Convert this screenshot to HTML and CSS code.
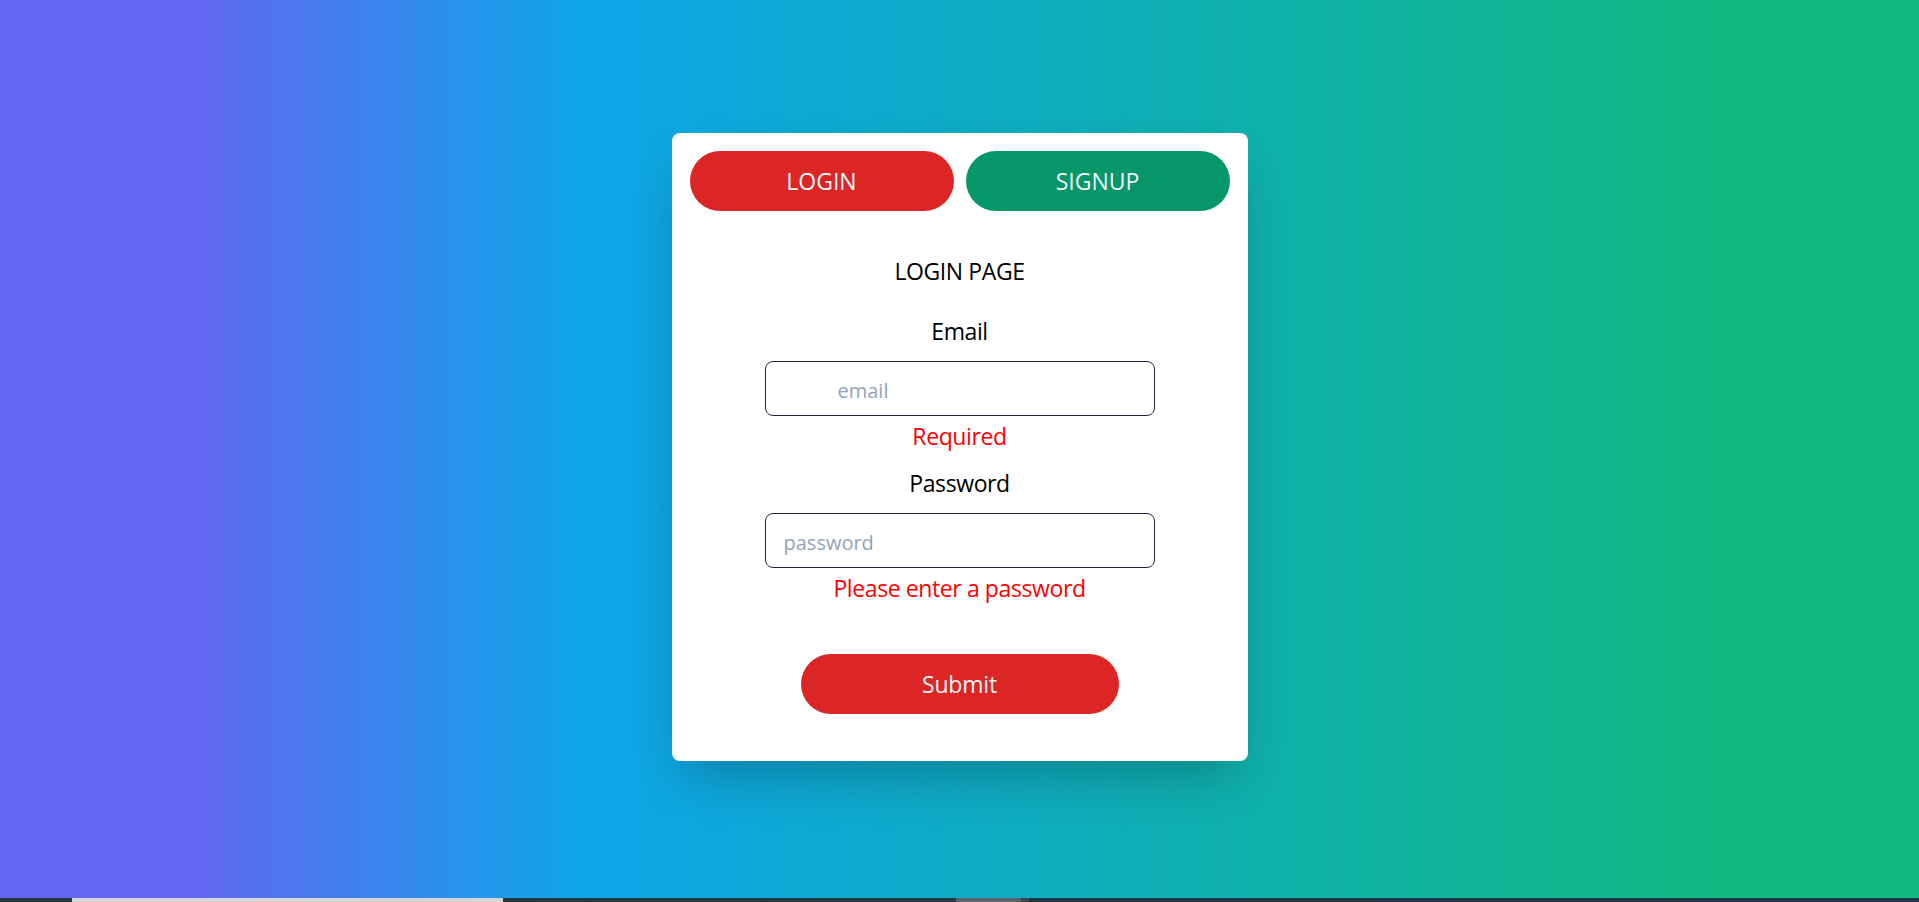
FILE: index.html
```html
<!DOCTYPE html>
<html lang="en">
<head>
<meta charset="utf-8">
<title>Login</title>
<link rel="stylesheet" href="styles.css">
</head>
<body>
<main class="page">
  <div class="card">
    <div class="tabs">
      <button class="tab tab-login" type="button">LOGIN</button>
      <button class="tab tab-signup" type="button">SIGNUP</button>
    </div>
    <form class="form">
      <h1 class="title">LOGIN PAGE</h1>
      <label class="label label-email" for="email">Email</label>
      <input id="email" class="input input-email" type="text" placeholder="email">
      <p class="error">Required</p>
      <label class="label label-password" for="password">Password</label>
      <input id="password" class="input input-password" type="password" placeholder="password">
      <p class="error">Please enter a password</p>
      <button class="submit" type="button">Submit</button>
    </form>
  </div>
</main>
<div class="taskbar">
  <span class="tb-seg tb-dark1"></span>
  <span class="tb-seg tb-light"></span>
  <span class="tb-seg tb-dark2"></span>
  <span class="tb-seg tb-gray"></span>
  <span class="tb-seg tb-gray2"></span>
  <span class="tb-seg tb-dark3"></span>
</div>
</body>
</html>
```
FILE: styles.css
```css
* { box-sizing: border-box; }
html, body { margin: 0; padding: 0; }
body {
  width: 1919px;
  height: 902px;
  overflow: hidden;
  font-family: "Open Sans", "Noto Sans", sans-serif;
  color: #000;
}
.page {
  height: 898px;
  padding-bottom: 4px;
  display: flex;
  justify-content: center;
  align-items: center;
  background: linear-gradient(to right, #6366f1 10%, #0ea5e9 30%, #10b981 90%);
}
.card {
  width: 576px;
  background: #fff;
  border-radius: 8px;
  padding: 18px 18px 47px;
  box-shadow: 0 25px 50px -12px rgba(0, 0, 0, 0.25);
}
.tabs {
  display: flex;
  gap: 12px;
}
.tab {
  flex: 1;
  height: 60px;
  border: none;
  border-radius: 9999px;
  color: #f1f5f9;
  font-family: inherit;
  font-size: 23px;
  line-height: 32px;
  padding: 0;
  cursor: pointer;
}
.tab-login { background: #dc2626; }
.tab-signup { background: #059669; }
.form {
  display: flex;
  flex-direction: column;
  align-items: center;
  margin: 0;
}
.title {
  margin: 44px 0 0;
  font-size: 23px;
  letter-spacing: -0.4px;
  font-weight: 400;
  line-height: 32px;
}
.label {
  display: block;
  font-size: 23px;
  letter-spacing: -0.4px;
  line-height: 32px;
}
.label-email { margin-top: 28px; }
.label-password { margin-top: 15px; }
.input {
  margin-top: 14px;
  width: 390px;
  height: 55px;
  border: 1px solid #1e293b;
  border-radius: 8px;
  font-family: inherit;
  font-size: 20px;
  color: #000;
  outline: none;
  background: #fff;
}
.input::placeholder { color: #94a3b8; }
.input-email { padding: 3px 12px 0 72px; }
.input-password { padding: 3px 12px 0 18px; }
.error {
  margin: 4px 0 0;
  color: #ff0000;
  font-size: 23px;
  letter-spacing: -0.4px;
  line-height: 32px;
}
.submit {
  margin-top: 50px;
  width: 318px;
  height: 60px;
  border: none;
  border-radius: 9999px;
  background: #dc2626;
  color: #f1f5f9;
  font-family: inherit;
  font-size: 23px;
  letter-spacing: -0.2px;
  line-height: 32px;
  padding: 0;
  cursor: pointer;
}
.taskbar {
  height: 4px;
  display: flex;
  background: #20323f;
}
.tb-seg { display: block; height: 4px; }
.tb-dark1 { width: 72px; background: #243a40; }
.tb-light { width: 431px; background: #d6d6d6; }
.tb-dark2 { width: 453px; background: #243a40; }
.tb-gray { width: 65px; background: #5b636a; }
.tb-gray2 { width: 8px; background: #3a4650; }
.tb-dark3 { flex: 1; background: #1f3442; }
```
